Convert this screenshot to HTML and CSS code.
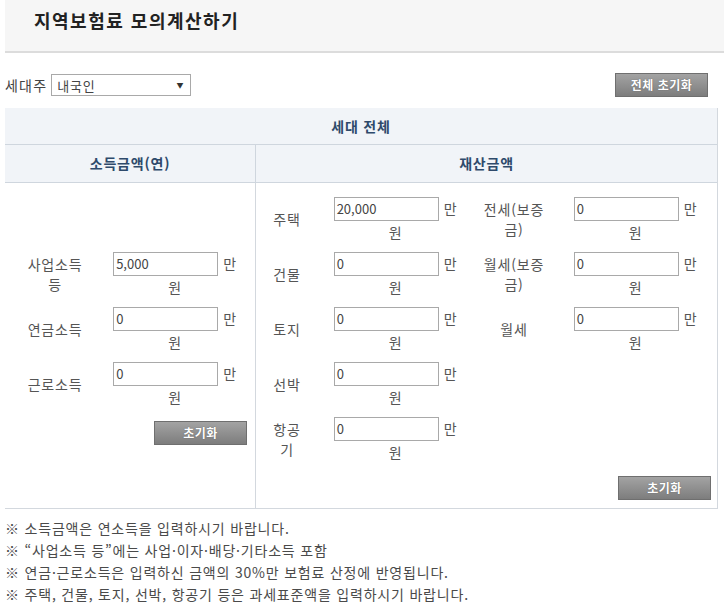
FILE: index.html
```html
<!DOCTYPE html>
<html lang="ko">
<head>
<meta charset="utf-8">
<title>지역보험료 모의계산하기</title>
<link rel="stylesheet" href="styles.css">
</head>
<body>
<div class="page">
  <div class="head"><h1 class="title">지역보험료 모의계산하기</h1></div>

  <div class="controls">
    <div class="owner">
      <span class="owner-label">세대주</span>
      <div class="select"><span>내국인</span><span class="arrow">▼</span></div>
    </div>
    <button class="btn btn-all">전체 초기화</button>
  </div>

  <div class="calc">
    <div class="calc-title">세대 전체</div>
    <div class="calc-subhead">
      <div class="sub sub-left">소득금액(연)</div>
      <div class="sub sub-right">재산금액</div>
    </div>
    <div class="calc-body">
      <div class="col col-left">
        <div class="inner">
          <div class="grid-left">
            <div class="lbl lbl-l">사업소득 등</div>
            <div class="val"><div class="line1"><span class="inp">5,000</span><span class="unit">만</span></div><div class="won">원</div></div>
            <div class="lbl lbl-l">연금소득</div>
            <div class="val"><div class="line1"><span class="inp">0</span><span class="unit">만</span></div><div class="won">원</div></div>
            <div class="lbl lbl-l">근로소득</div>
            <div class="val"><div class="line1"><span class="inp">0</span><span class="unit">만</span></div><div class="won">원</div></div>
          </div>
          <div class="btn-row"><button class="btn">초기화</button></div>
        </div>
      </div>
      <div class="col col-right">
        <div class="inner">
          <div class="grid-right">
            <div class="lbl lbl-r1">주택</div>
            <div class="val"><div class="line1"><span class="inp">20,000</span><span class="unit">만</span></div><div class="won">원</div></div>
            <div class="lbl lbl-r2">전세(보증금)</div>
            <div class="val"><div class="line1"><span class="inp">0</span><span class="unit">만</span></div><div class="won">원</div></div>

            <div class="lbl lbl-r1">건물</div>
            <div class="val"><div class="line1"><span class="inp">0</span><span class="unit">만</span></div><div class="won">원</div></div>
            <div class="lbl lbl-r2">월세(보증금)</div>
            <div class="val"><div class="line1"><span class="inp">0</span><span class="unit">만</span></div><div class="won">원</div></div>

            <div class="lbl lbl-r1">토지</div>
            <div class="val"><div class="line1"><span class="inp">0</span><span class="unit">만</span></div><div class="won">원</div></div>
            <div class="lbl lbl-r2">월세</div>
            <div class="val"><div class="line1"><span class="inp">0</span><span class="unit">만</span></div><div class="won">원</div></div>

            <div class="lbl lbl-r1">선박</div>
            <div class="val"><div class="line1"><span class="inp">0</span><span class="unit">만</span></div><div class="won">원</div></div>
            <div class="empty"></div>
            <div class="empty"></div>

            <div class="lbl lbl-r1">항공기</div>
            <div class="val"><div class="line1"><span class="inp">0</span><span class="unit">만</span></div><div class="won">원</div></div>
            <div class="empty"></div>
            <div class="empty"></div>
          </div>
          <div class="btn-row btn-row-r"><button class="btn">초기화</button></div>
        </div>
      </div>
    </div>
  </div>

  <ul class="notes">
    <li>※ 소득금액은 연소득을 입력하시기 바랍니다.</li>
    <li>※ “사업소득 등”에는 사업·이자·배당·기타소득 포함</li>
    <li>※ 연금·근로소득은 입력하신 금액의 30%만 보험료 산정에 반영됩니다.</li>
    <li>※ 주택, 건물, 토지, 선박, 항공기 등은 과세표준액을 입력하시기 바랍니다.</li>
  </ul>
</div>
</body>
</html>
```

FILE: styles.css
```css
* { box-sizing: border-box; }
html, body { margin: 0; padding: 0; background: #fff; }
body {
  font-family: "Noto Sans CJK KR", "Noto Sans", sans-serif;
  font-size: 14px;
  color: #555;
  letter-spacing: 0.8px;
}
.page { padding: 0 6px 0 5px; }

.head {
  height: 53px;
  margin-right: -6px;
  background: #f6f6f6;
  border-bottom: 2px solid #dcdcdc;
}
.title {
  margin: 0;
  padding-left: 29px;
  font-size: 18px;
  line-height: 40px;
  font-weight: bold;
  letter-spacing: 1.5px;
  color: #222;
}

.controls {
  display: flex;
  justify-content: space-between;
  align-items: center;
  height: 24px;
  margin-top: 20px;
  margin-bottom: 11px;
}
.owner { display: flex; align-items: center; gap: 4px; }
.owner-label { font-size: 14px; color: #444; line-height: 22px; letter-spacing: 1.2px; }
.select {
  width: 140px;
  height: 22px;
  border: 1px solid #a9a9a9;
  background: #fff;
  display: flex;
  align-items: center;
  justify-content: space-between;
  padding: 0 6px 0 5px;
  font-size: 13px;
  color: #444;
}
.arrow { font-size: 7px; color: #333; }

.btn {
  width: 93px;
  height: 24px;
  padding: 0;
  border: 1px solid #6f6f6f;
  background: linear-gradient(#a3a3a3, #7d7d7d);
  color: #fff;
  font-family: "Noto Sans CJK KR", sans-serif;
  font-size: 12px;
  font-weight: bold;
  letter-spacing: 0.5px;
  text-shadow: 0 0 1px #555;
  line-height: 22px;
}
.btn-all { margin-right: 10px; }

.calc {
  width: 713px;
  border-right: 1px solid #d3d8de;
  border-bottom: 1px solid #d3d8de;
}
.calc-title {
  height: 37px;
  background: #f1f4f8;
  border-bottom: 1px solid #cfd6de;
  text-align: center;
  line-height: 36px;
  font-weight: bold;
  color: #2e4a6b;
}
.calc-subhead {
  display: flex;
  height: 38px;
  background: #f1f4f8;
  border-bottom: 1px solid #cfd6de;
}
.sub {
  line-height: 37px;
  text-align: center;
  font-weight: bold;
  color: #2e4a6b;
}
.sub-left { width: 251px; border-right: 1px solid #cfd6de; }
.sub-right { flex: 1; }

.calc-body { display: flex; height: 325px; }
.col { display: flex; align-items: center; }
.col-left { width: 251px; border-right: 1px solid #d3d8de; }
.col-right { flex: 1; }
.inner { width: 100%; }

.grid-left { display: grid; grid-template-columns: 100px 140px; }
.grid-right { display: grid; grid-template-columns: 62px 155px 82px 161px; }

.lbl {
  display: flex;
  align-items: center;
  justify-content: center;
  text-align: center;
  line-height: 20px;
  color: #555;
  height: 55px;
}
.lbl-l { padding: 0 16px; }
.lbl-r1 { padding: 0 12px; }
.lbl-r2 { padding: 0 6px; }
.empty { height: 55px; }

.val {
  display: flex;
  flex-direction: column;
  align-items: center;
  padding-top: 5px;
  height: 55px;
}
.line1 { display: flex; align-items: center; gap: 5px; }
.inp {
  display: block;
  width: 105px;
  height: 24px;
  border: 1px solid #a9a9a9;
  background: #fff;
  padding-left: 2px;
  font-size: 13px;
  line-height: 22px;
  letter-spacing: 0;
  color: #444;
}
.unit { line-height: 20px; margin-top: -2px; }
.won { line-height: 22px; }

.btn-row { display: flex; justify-content: flex-end; padding-right: 8px; margin-top: 9px; }
.btn-row-r { padding-right: 6px; }

.notes {
  list-style: none;
  margin: 8px 0 0;
  padding: 0;
  line-height: 22px;
  color: #4a4a4a;
}
```
